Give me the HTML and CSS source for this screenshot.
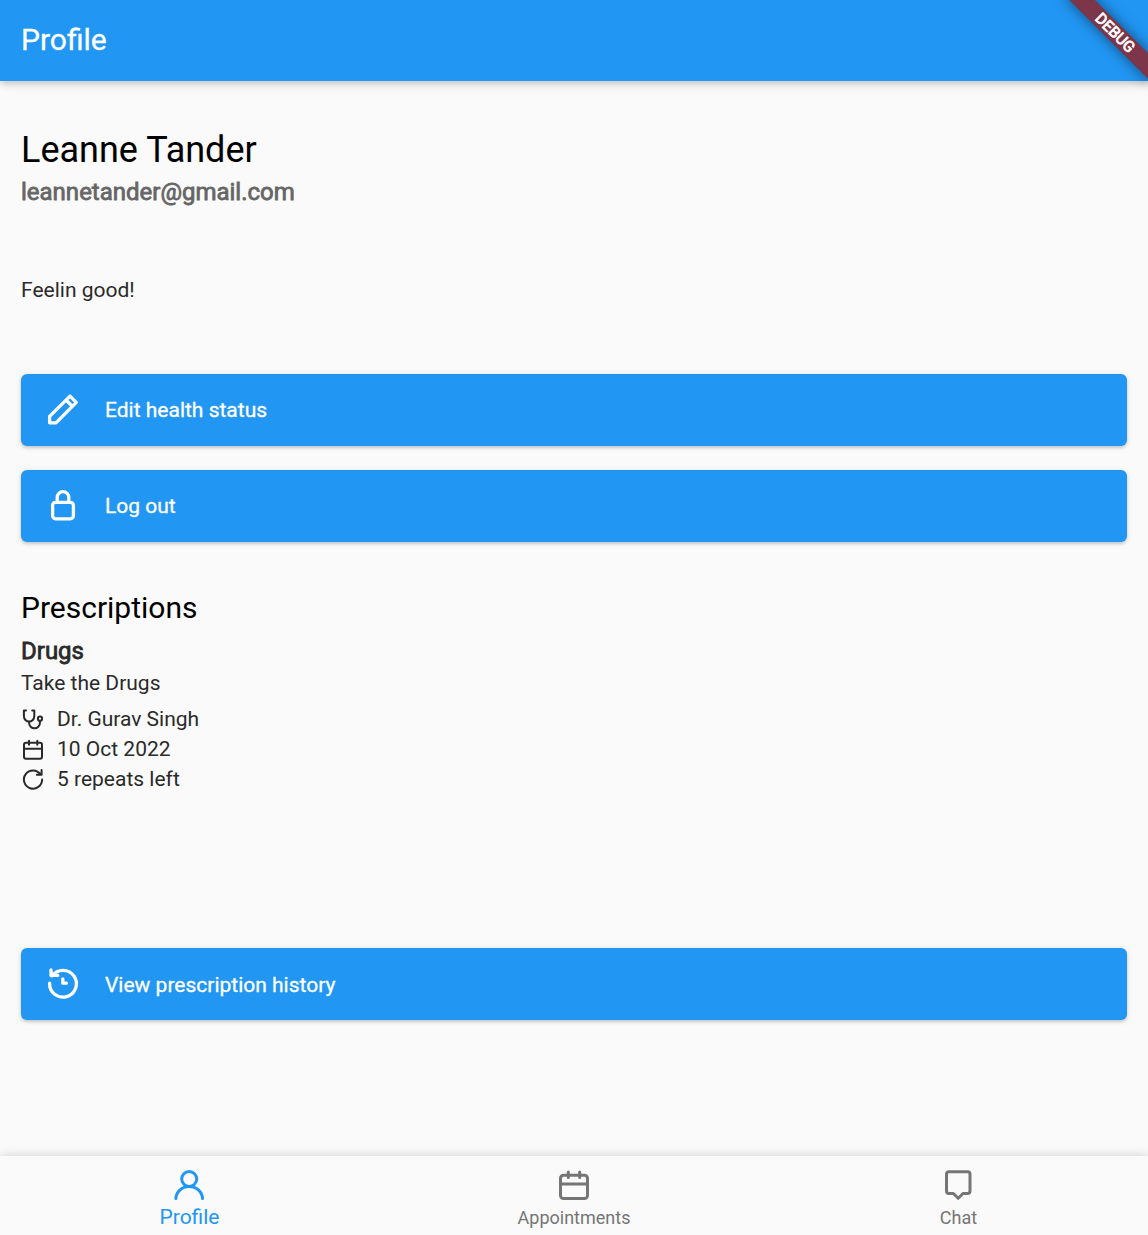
FILE: index.html
```html
<!DOCTYPE html>
<html lang="en">
<head>
<meta charset="utf-8">
<title>Profile</title>
<link rel="stylesheet" href="styles.css">
</head>
<body>
<div class="app">
  <header class="app-bar">
    <h1 class="app-title">Profile</h1>
    <div class="debug-corner"><div class="debug-band">DEBUG</div></div>
  </header>
  <main class="content">
    <h2 class="name">Leanne Tander</h2>
    <p class="email">leannetander@gmail.com</p>
    <p class="status">Feelin good!</p>
    <div class="actions">
      <button class="action">
        <svg class="icon" viewBox="0 0.6 36 36"><path d="M4.6 31.4V25L25 4.7L31.3 11L11 31.4ZM21 8.6L27.4 15"/></svg>
        <span>Edit health status</span>
      </button>
      <button class="action">
        <svg class="icon" viewBox="0 0.6 36 36"><rect x="7.6" y="15" width="20.8" height="16.4" rx="3"/><path d="M12.2 15V10a5.8 5.8 0 0 1 11.6 0V15"/></svg>
        <span>Log out</span>
      </button>
    </div>
    <h3 class="section-title">Prescriptions</h3>
    <section class="prescription">
      <h4 class="drug">Drugs</h4>
      <p class="instructions">Take the Drugs</p>
      <ul class="details">
        <li>
          <svg class="small-icon" viewBox="0 0.5 24 24"><path d="M5 2.9H2.9V8.5a5.2 5.6 0 0 0 10.4 0V2.9H11.2M8.1 14.1V15.4a5.4 5.4 0 0 0 10.8 0V13.4"/><circle cx="19" cy="11.2" r="2.1"/></svg>
          <span>Dr. Gurav Singh</span>
        </li>
        <li>
          <svg class="small-icon" viewBox="0 0.5 24 24"><rect x="3" y="5.2" width="18" height="16" rx="2"/><path d="M3 11.2H21M8 3.2V7.2M16.3 3.2V7.2"/></svg>
          <span>10 Oct 2022</span>
        </li>
        <li>
          <svg class="small-icon" viewBox="0 0.5 24 24"><path d="M21.1 12A9.1 9.1 0 1 1 19.5 6.9M20.6 2.6V7.2H15.8"/></svg>
          <span>5 repeats left</span>
        </li>
      </ul>
    </section>
    <button class="action history">
      <svg class="icon" viewBox="0 0 36 36"><path d="M4.6 17.2A13.4 13.4 0 1 0 7.2 9.8M6 4V9.4H12.8M17.8 12.8V17.2H21.4"/></svg>
      <span>View prescription history</span>
    </button>
  </main>
  <nav class="bottom-nav">
    <a class="tab selected">
      <svg class="icon" viewBox="0 0 36 36"><circle cx="18.2" cy="12" r="7.5"/><path d="M4.9 31.6a13.3 12.1 0 0 1 26.6 0"/></svg>
      <span>Profile</span>
    </a>
    <a class="tab">
      <svg class="icon" viewBox="0 0 36 36"><rect x="4.5" y="8.2" width="27" height="23.3" rx="3"/><path d="M4.5 17H31.5M12.3 5V10.4M23.7 5V10.4"/></svg>
      <span>Appointments</span>
    </a>
    <a class="tab">
      <svg class="icon" viewBox="0 0 36 36"><path d="M9 4.8H27.5Q30 4.8 30 7.3V24Q30 26.5 27.5 26.5H23L18.2 31.3L13.4 26.5H9Q6.5 26.5 6.5 24V7.3Q6.5 4.8 9 4.8Z"/></svg>
      <span>Chat</span>
    </a>
  </nav>
</div>
</body>
</html>
```
FILE: styles.css
```css
* {
  box-sizing: border-box;
  margin: 0;
  padding: 0;
}

body {
  background: #fafafa;
  color: #2a2a2a;
  font-family: Roboto, "Liberation Sans", sans-serif;
  font-size: 21px;
}

h1, h2, h3, h4 {
  font-weight: 400;
}

.app {
  display: flex;
  flex-direction: column;
  height: 1235px;
  overflow: hidden;
}

.app-bar {
  position: relative;
  display: flex;
  align-items: center;
  flex: none;
  height: 81px;
  padding: 0 21px 2px;
  background: #2196f3;
  box-shadow: 0 3px 6px -1px rgba(0, 0, 0, 0.14), 0 5px 8px rgba(0, 0, 0, 0.06), 0 1px 15px rgba(0, 0, 0, 0.06);
}

.app-title {
  color: #fff;
  font-size: 30px;
  line-height: 36px;
  -webkit-text-stroke: 0.3px #fff;
}

.debug-corner {
  position: absolute;
  top: 0;
  right: 0;
  width: 120px;
  height: 120px;
  overflow: hidden;
}

.debug-band {
  position: absolute;
  top: 23.5px;
  left: 27px;
  width: 120px;
  height: 18px;
  transform: rotate(45deg);
  background: #7d3549;
  box-shadow: 0 0 14px rgba(0, 0, 0, 0.5);
  color: #fff;
  font-size: 15.3px;
  line-height: 18px;
  text-align: center;
  -webkit-text-stroke: 0.8px #fff;
}

.content {
  flex: 1;
  padding: 48px 21px 0;
}

.name {
  color: #000;
  font-size: 36px;
  line-height: 42px;
}

.email {
  margin-top: 7px;
  color: #666;
  font-size: 24px;
  line-height: 28px;
  -webkit-text-stroke: 0.8px #666;
}

.status {
  margin-top: 71px;
  line-height: 26px;
}

.actions {
  display: flex;
  flex-direction: column;
  gap: 24px;
  margin-top: 70.5px;
}

.action {
  display: flex;
  align-items: center;
  gap: 24px;
  width: 100%;
  height: 72px;
  padding: 0 24px;
  border: 0;
  border-radius: 6px;
  background: #2196f3;
  box-shadow: 0 2px 3px rgba(0, 0, 0, 0.14), 0 1px 6px rgba(0, 0, 0, 0.1);
  color: #fff;
  font: inherit;
  -webkit-text-stroke: 0.3px #fff;
}

.history span {
  padding-top: 2px;
}

.icon,
.small-icon {
  display: block;
  flex: none;
  fill: none;
  stroke: currentColor;
  stroke-linecap: round;
  stroke-linejoin: round;
}

.icon {
  width: 36px;
  height: 36px;
  stroke-width: 3;
}

.action .icon {
  stroke-width: 3.3;
}

.small-icon {
  width: 24px;
  height: 24px;
  margin-top: 1px;
  stroke-width: 2;
}

.section-title {
  margin-top: 48px;
  color: #000;
  font-size: 30px;
  line-height: 36px;
}

.prescription {
  height: 322.5px;
  padding-top: 11.5px;
}

.drug {
  font-size: 24px;
  line-height: 28px;
  -webkit-text-stroke: 0.8px #2a2a2a;
}

.instructions {
  margin-top: 6px;
  line-height: 25px;
}

.details {
  margin-top: 8px;
  list-style: none;
}

.details li {
  display: flex;
  align-items: center;
  gap: 12px;
  height: 30px;
}

.bottom-nav {
  display: grid;
  grid-template-columns: 378px 1fr 380px;
  flex: none;
  height: 79px;
  background: #fafafa;
  box-shadow: 0 0 10px rgba(0, 0, 0, 0.18);
}

.tab {
  display: flex;
  flex-direction: column;
  align-items: center;
  padding-top: 11px;
  color: #757575;
  font-size: 18px;
  line-height: 30px;
}

.tab span {
  padding-left: 1px;
}

.tab:nth-child(2) {
  padding-left: 1px;
}

.selected {
  color: #2196f3;
  font-size: 21px;
  line-height: 28px;
}
```
